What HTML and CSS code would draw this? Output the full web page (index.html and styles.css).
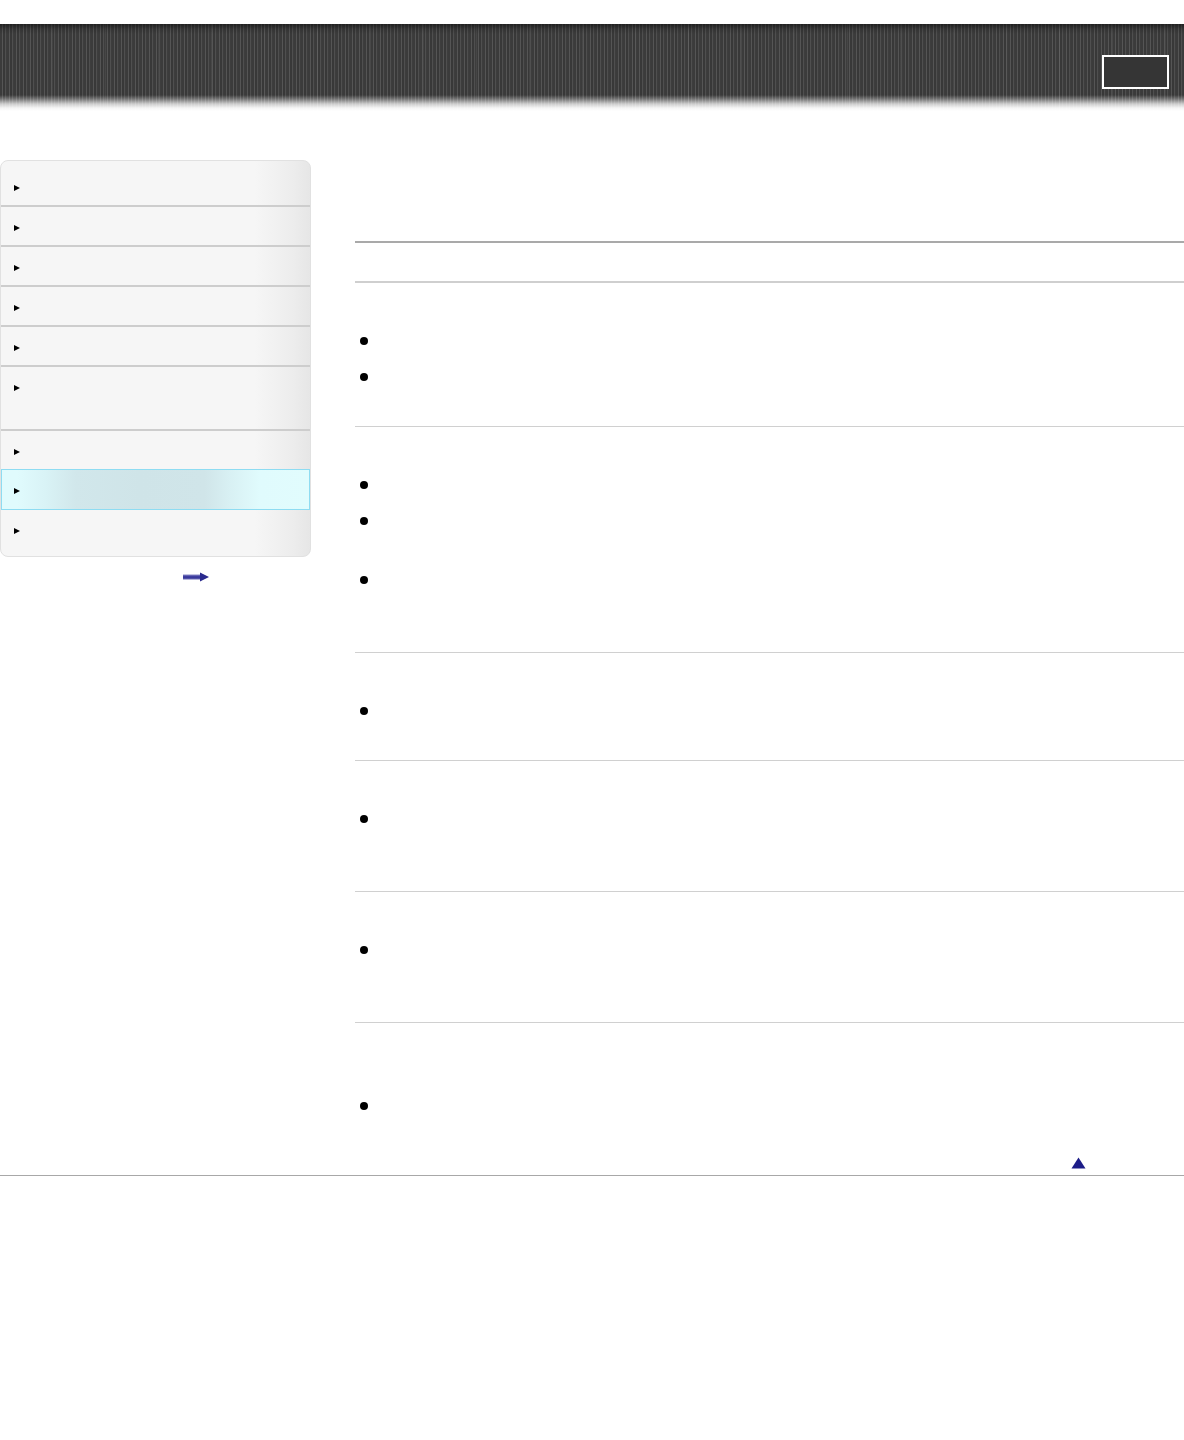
FILE: index.html
```html
<!DOCTYPE html>
<html lang="en">
<head>
<meta charset="utf-8">
<title>Help Guide</title>
<link rel="stylesheet" href="styles.css">
</head>
<body>
<header class="top">
  <div class="top-btn"></div>
</header>
<div class="page">
  <aside class="side">
    <ul class="menu">
      <li class="item first"><span class="tri"></span></li>
      <li class="item"><span class="tri"></span></li>
      <li class="item"><span class="tri"></span></li>
      <li class="item"><span class="tri"></span></li>
      <li class="item"><span class="tri"></span></li>
      <li class="item tall"><span class="tri"></span></li>
      <li class="item pre-active"><span class="tri"></span></li>
      <li class="item active"><span class="tri"></span></li>
      <li class="item last"><span class="tri"></span></li>
    </ul>
    <div class="more">
      <svg width="26" height="10" viewBox="0 0 26 10" aria-hidden="true">
        <defs>
          <linearGradient id="shaft" x1="0" y1="0" x2="0" y2="1">
            <stop offset="0" stop-color="#8c8cc8"/>
            <stop offset="0.5" stop-color="#2c2c96"/>
            <stop offset="1" stop-color="#6a6ab4"/>
          </linearGradient>
        </defs>
        <rect x="0" y="2.5" width="18" height="5" fill="url(#shaft)"/>
        <polygon points="17,0.5 26,5 17,9.5" fill="#2a2a8e"/>
      </svg>
    </div>
  </aside>
  <main class="content">
    <div class="title"></div>
    <div class="subbar"></div>
    <section class="sec">
      <div class="sec-head"></div>
      <ul class="bullets">
        <li><span class="dot"></span><span class="txt l1"></span></li>
        <li><span class="dot"></span><span class="txt l1"></span></li>
      </ul>
    </section>
    <section class="sec">
      <div class="sec-head"></div>
      <ul class="bullets">
        <li><span class="dot"></span><span class="txt l1"></span></li>
        <li><span class="dot"></span><span class="txt l2"></span></li>
        <li><span class="dot"></span><span class="txt l2"></span></li>
      </ul>
    </section>
    <section class="sec">
      <div class="sec-head"></div>
      <ul class="bullets">
        <li><span class="dot"></span><span class="txt l1"></span></li>
      </ul>
    </section>
    <section class="sec">
      <div class="sec-head"></div>
      <ul class="bullets">
        <li><span class="dot"></span><span class="txt l2"></span></li>
      </ul>
    </section>
    <section class="sec">
      <div class="sec-head"></div>
      <ul class="bullets">
        <li><span class="dot"></span><span class="txt l2"></span></li>
      </ul>
    </section>
    <section class="sec sec-last">
      <div class="sec-head"></div>
      <p class="sec-note"></p>
      <ul class="bullets">
        <li><span class="dot"></span><span class="txt l1"></span></li>
      </ul>
    </section>
    <div class="pagetop">
      <svg width="15" height="12" viewBox="0 0 15 12" aria-hidden="true">
        <polygon points="7.5,0.5 14.5,11.5 0.5,11.5" fill="#1c1c88"/>
      </svg>
    </div>
  </main>
</div>
<footer class="foot"></footer>
</body>
</html>
```

FILE: styles.css
```css
html, body {
  margin: 0;
  padding: 0;
  background: #fff;
  font-family: "Liberation Sans", Arial, sans-serif;
  color: #000;
}

/* ---------- header ---------- */
.top {
  margin-top: 24px;
  height: 88px;
  display: flex;
  justify-content: flex-end;
  align-items: flex-start;
  padding: 31px 15px 0 0;
  box-sizing: border-box;
  background:
    linear-gradient(to bottom,
      rgba(10,10,10,0.55) 0px,
      rgba(10,10,10,0.15) 5px,
      rgba(0,0,0,0) 10px,
      rgba(0,0,0,0) 71px,
      rgba(255,255,255,0.3) 75px,
      rgba(255,255,255,0.75) 80px,
      rgba(255,255,255,0.95) 84px,
      #fff 87px),
    repeating-linear-gradient(90deg,
      rgba(255,255,255,0) 0px,
      rgba(255,255,255,0) 52px,
      rgba(255,255,255,0.06) 52px,
      rgba(255,255,255,0.06) 53px),
    repeating-linear-gradient(90deg,
      #3b3b3b 0px, #3b3b3b 2px,
      #555 2px, #555 3px,
      #383838 3px, #383838 5px,
      #4f4f4f 5px, #4f4f4f 6px,
      #3d3d3d 6px, #3d3d3d 7px);
}

.top-btn {
  width: 63px;
  height: 30px;
  border: 2px solid #fff;
  background: #353535;
}

/* ---------- layout ---------- */
.page {
  display: flex;
  align-items: flex-start;
  margin-top: 48px;
}

.side {
  width: 311px;
  flex: 0 0 311px;
}

.content {
  flex: 1;
  margin-left: 44px;
  min-width: 0;
}

/* ---------- sidebar menu ---------- */
.menu {
  list-style: none;
  margin: 0;
  padding: 0;
  border: 1px solid #e1e1e1;
  border-radius: 8px;
  overflow: hidden;
  background: linear-gradient(90deg,
    #f6f6f6 0%,
    #f6f6f6 82%,
    #ececec 95%,
    #e6e6e6 100%);
}

.item {
  padding: 18px 0 14px 13px;
  border-bottom: 2px solid #cdcdcd;
  display: flex;
  align-items: flex-start;
}

.item.first {
  padding-top: 24px;
  padding-bottom: 14px;
}

.item.tall {
  padding-bottom: 38px;
}

.item.pre-active {
  border-bottom: none;
}

.item.active {
  border: 1px solid #8edcf2;
  padding: 18px 0 15px 12px;
  background: linear-gradient(90deg,
    #e0fbfd 0%,
    #e0fbfd 5%,
    #d9f3f6 14%,
    #d1e7eb 24%,
    #cfe4e8 45%,
    #d0e5e9 66%,
    #d8f0f3 74%,
    #e0fbfd 84%,
    #e1fcfd 100%);
}

.item.last {
  border-bottom: none;
  padding-bottom: 22px;
}

.tri {
  display: block;
  width: 0;
  height: 0;
  border-left: 6px solid #000;
  border-top: 3.5px solid transparent;
  border-bottom: 3.5px solid transparent;
}

.more {
  margin-top: 15px;
  padding-left: 183px;
  height: 10px;
  line-height: 0;
}

/* ---------- content ---------- */
.title {
  height: 81px;
  border-bottom: 2px solid #a9a9a9;
}

.subbar {
  height: 38px;
  border-bottom: 2px solid #cfcfcf;
}

.sec {
  border-bottom: 1px solid #d0d0d0;
}

.sec-head {
  height: 46px;
}

.bullets {
  list-style: none;
  margin: 0;
  padding: 0 0 38px 0;
}

.bullets li {
  display: flex;
  align-items: flex-start;
}

.bullets li + li {
  margin-top: 13px;
}

.dot {
  flex: 0 0 8px;
  width: 8px;
  height: 8px;
  border-radius: 50%;
  background: #000;
  margin: 7.5px 0 0 5px;
}

.txt {
  flex: 1;
  margin-left: 11px;
}

.txt.l1 { height: 23px; }
.txt.l2 { height: 46px; }

.sec-last {
  border-bottom: none;
}

.sec-note {
  margin: 0;
  height: 25px;
}

.sec-last .bullets {
  padding-bottom: 0;
}

.pagetop {
  display: flex;
  justify-content: flex-end;
  padding: 40px 98px 6px 0;
  line-height: 0;
}

/* ---------- footer ---------- */
.foot {
  border-top: 1px solid #a8a8a8;
  height: 264px;
}
```
